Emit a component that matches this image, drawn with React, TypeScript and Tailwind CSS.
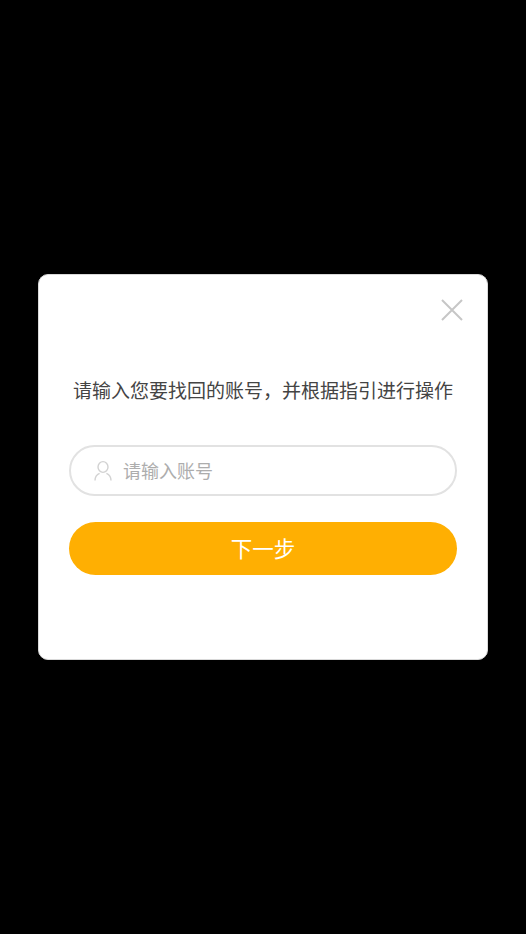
import React from 'react';

const UserIcon = () => (
  <svg width="20" height="22" viewBox="0 0 20 22" fill="none" stroke="#d2d2d2" strokeWidth="1.4" className="shrink-0">
    <ellipse cx="10" cy="7" rx="5" ry="5.4" />
    <path d="M2 20.5c0-3.8 1.8-6 4.6-7.2M18 20.5c0-3.8-1.8-6-4.6-7.2" />
  </svg>
);

const CloseIcon = () => (
  <svg width="22" height="22" viewBox="0 0 22 22" fill="none" stroke="#c6c6c6" strokeWidth="2">
    <path d="M1 1l20 20M21 1L1 21" />
  </svg>
);

export default function App() {
  return (
    <div className="w-full h-[934px] bg-black flex items-center justify-center font-['Noto_Sans_CJK_SC',sans-serif]">
      <div className="w-[450px] h-[386px] bg-white rounded-[10px] border border-[#d9d9d9] flex flex-col px-[30px]">
        <div className="flex justify-end pt-[24px] -mr-[6px]">
          <button className="block">
            <CloseIcon />
          </button>
        </div>
        <p className="mt-[55px] text-[19px] leading-[28px] text-[#444444] text-center whitespace-nowrap">
          请输入您要找回的账号，并根据指引进行操作
        </p>
        <div className="mt-[41px] h-[51px] rounded-full border-2 border-[#e2e2e2] flex items-center pl-[22px] gap-[10px]">
          <UserIcon />
          <span className="text-[18px] text-[#adadad]">请输入账号</span>
        </div>
        <button className="mt-[26px] h-[53px] rounded-full bg-[#ffaf02] text-white text-[21.5px] flex items-center justify-center">
          下一步
        </button>
      </div>
    </div>
  );
}
